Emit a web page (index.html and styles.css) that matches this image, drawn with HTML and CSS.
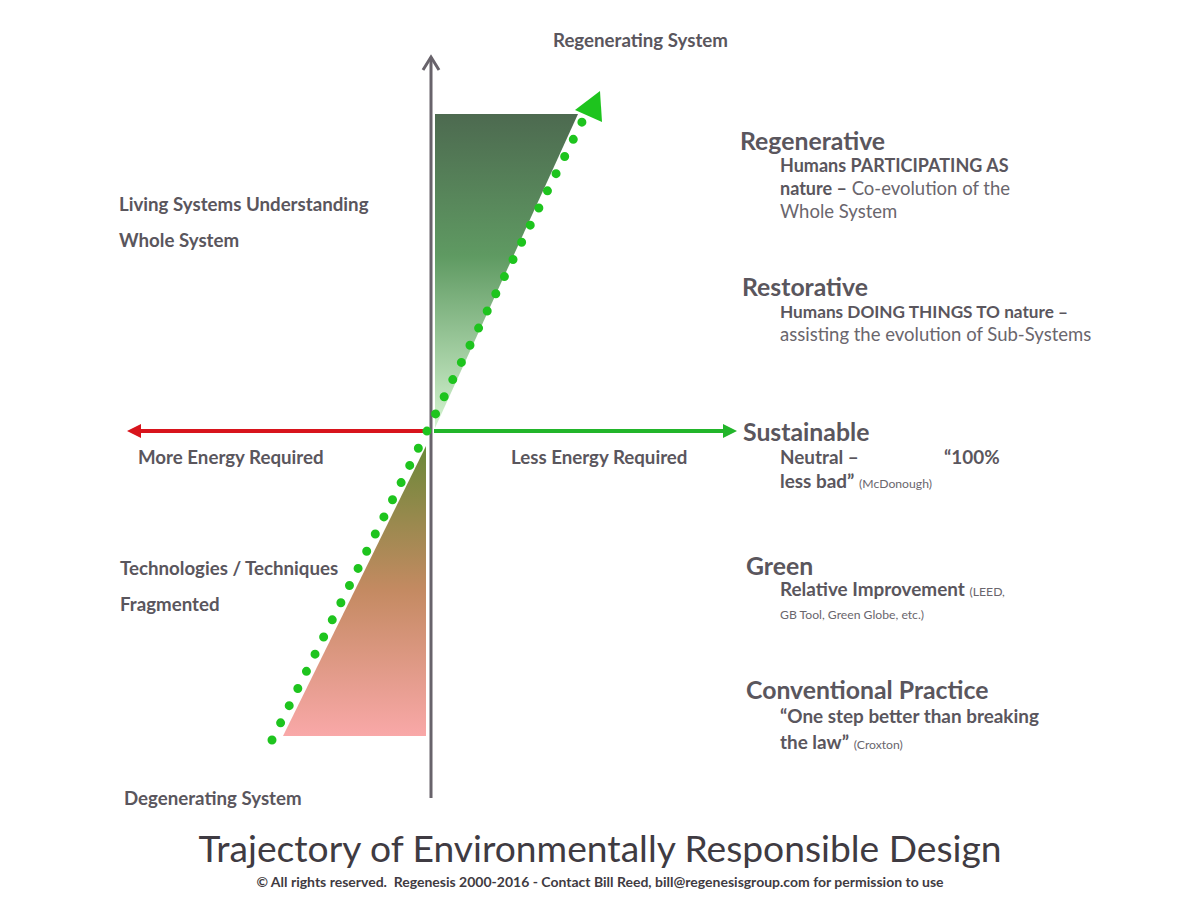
FILE: index.html
```html
<!DOCTYPE html>
<html>
<head>
<meta charset="utf-8">
<link rel="stylesheet" href="styles.css">
</head>
<body>
<div class="page">
  <div class="diagram">
    <svg class="graphics" width="1200" height="820" viewBox="0 0 1200 820">
      <defs>
        <linearGradient id="up" x1="0" y1="114" x2="0" y2="430" gradientUnits="userSpaceOnUse">
          <stop offset="0" stop-color="#4d6a50"/>
          <stop offset="0.45" stop-color="#5f9a62"/>
          <stop offset="1" stop-color="#d6f5d2"/>
        </linearGradient>
        <linearGradient id="down" x1="0" y1="445" x2="0" y2="736" gradientUnits="userSpaceOnUse">
          <stop offset="0" stop-color="#6a8838"/>
          <stop offset="0.5" stop-color="#c48a62"/>
          <stop offset="1" stop-color="#f9a8a8"/>
        </linearGradient>
      </defs>
      <polygon points="435,114 578,114 435,428" fill="url(#up)"/>
      <polygon points="426,446 426,736 283,736" fill="url(#down)"/>
      <line x1="431" y1="57" x2="431" y2="798" stroke="#68636b" stroke-width="3"/>
      <polyline points="423,70 431,57 439,70" fill="none" stroke="#68636b" stroke-width="3" stroke-linejoin="miter"/>
      <line x1="140" y1="431" x2="428" y2="431" stroke="#d8141c" stroke-width="4"/>
      <polygon points="127,431 141,424 141,438" fill="#d8141c"/>
      <line x1="434" y1="431" x2="724" y2="431" stroke="#22b52a" stroke-width="4"/>
      <polygon points="737,431 723,424 723,438" fill="#22b52a"/>
      <line x1="272" y1="740" x2="588" y2="110" stroke="#1ec41e" stroke-width="9" stroke-linecap="round" stroke-dasharray="0 19.2"/>
      <polygon points="600,91 575,110 602,122" fill="#1ec41e"/>
    </svg>

    <div class="label top-label">Regenerating System</div>
    <div class="label left-block lb-living">
      <div>Living Systems Understanding</div>
      <div>Whole System</div>
    </div>
    <div class="label axis-label more">More Energy Required</div>
    <div class="label axis-label less">Less Energy Required</div>
    <div class="label left-block lb-tech">
      <div>Technologies / Techniques</div>
      <div>Fragmented</div>
    </div>
    <div class="label bottom-label">Degenerating System</div>

    <div class="stage st-regen">
      <div class="stage-title">Regenerative</div>
      <div class="stage-desc"><b>Humans PARTICIPATING AS</b><br><b>nature –</b> Co-evolution of the<br>Whole System</div>
    </div>
    <div class="stage st-restor">
      <div class="stage-title">Restorative</div>
      <div class="stage-desc"><b>Humans DOING THINGS TO nature –</b><br>assisting the evolution of Sub-Systems</div>
    </div>
    <div class="stage st-sust">
      <div class="stage-title">Sustainable</div>
      <div class="stage-desc"><b class="neutral">Neutral –</b><b>“100%</b><br><b>less bad”</b> <small>(McDonough)</small></div>
    </div>
    <div class="stage st-green">
      <div class="stage-title">Green</div>
      <div class="stage-desc"><b>Relative Improvement</b> <small>(LEED,</small><br><small>GB Tool, Green Globe, etc.)</small></div>
    </div>
    <div class="stage st-conv">
      <div class="stage-title">Conventional Practice</div>
      <div class="stage-desc"><b>“One step better than breaking</b><br><b>the law”</b> <small>(Croxton)</small></div>
    </div>
  </div>
  <footer class="footer">
    <h1 class="title">Trajectory of Environmentally Responsible Design</h1>
    <p class="copy">© All rights reserved.&nbsp; Regenesis 2000-2016 - Contact Bill Reed, bill@regenesisgroup.com for permission to use</p>
  </footer>
</div>
</body>
</html>
```

FILE: styles.css
```css
* { box-sizing: border-box; }
html, body { margin: 0; padding: 0; background: #ffffff; }
body {
  font-family: "Lato", "Open Sans", "Liberation Sans", sans-serif;
  color: #5a565d;
}
.page {
  width: 1200px;
  height: 900px;
  overflow: hidden;
  display: flex;
  flex-direction: column;
}
.diagram {
  position: relative;
  width: 1200px;
  height: 820px;
  flex: none;
}
.graphics {
  position: absolute;
  left: 0;
  top: 0;
}
.label {
  position: absolute;
  font-weight: 700;
  font-size: 18.7px;
  white-space: nowrap;
  line-height: 20px;
}
.top-label { left: 553px; top: 30px; }
.left-block div { line-height: 36px; }
.lb-living { left: 119px; top: 186px; }
.lb-tech { left: 120px; top: 550px; }
.more { left: 138px; top: 447px; }
.less { left: 511px; top: 447px; }
.bottom-label { left: 124px; top: 788px; }

.stage {
  position: absolute;
  white-space: nowrap;
}
.stage-title {
  font-size: 24.8px;
  font-weight: 700;
  line-height: 26px;
}
.stage-desc {
  font-size: 18.5px;
  line-height: 23px;
  color: #6a666d;
}
.stage-desc b { color: #5a565d; font-weight: 700; font-size: 17.2px; }
.stage-desc small { font-size: 12.2px; color: #6a666d; }
.neutral { display: inline-block; width: 164px; }
.st-regen { left: 740px; top: 128px; }
.st-regen .stage-desc { padding-left: 40px; }
.st-regen .stage-desc b { font-size: 18px; }
.st-restor { left: 742px; top: 274px; }
.st-restor .stage-desc { padding-left: 38px; }
.st-sust { left: 743px; top: 419px; }
.st-sust .stage-desc { padding-left: 37px; }
.st-sust .stage-desc b,
.st-green .stage-desc b,
.st-conv .stage-desc b { font-size: 18.9px; }
.st-green { left: 746px; top: 553px; }
.st-green .stage-desc { padding-left: 34px; line-height: 20px; }
.st-conv { left: 746px; top: 677px; }
.st-conv .stage-desc { padding-left: 34px; line-height: 25px; }

.footer {
  display: flex;
  flex-direction: column;
  align-items: center;
  padding-top: 5px;
}
.title {
  margin: 0;
  font-weight: 400;
  font-size: 37.2px;
  line-height: 46px;
  color: #3f3b42;
}
.copy {
  margin: 2px 0 0 0;
  font-size: 14px;
  font-weight: 700;
  color: #3f3b42;
}
```
